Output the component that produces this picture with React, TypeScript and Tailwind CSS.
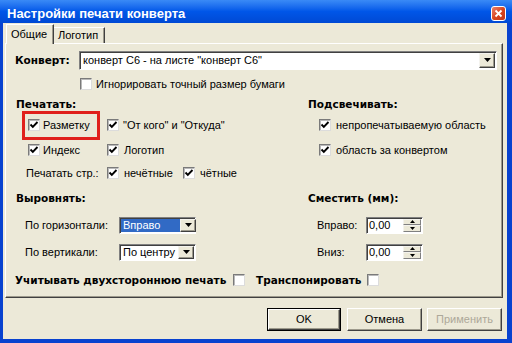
import React from "react";

const BASE = "font-['Liberation_Sans',Arial,sans-serif] text-[11px] leading-none whitespace-nowrap";
const REG = `${BASE} text-black`;
const BOLD = "font-['DejaVu_Sans',Verdana,sans-serif] font-bold text-[10.5px] text-black leading-none whitespace-nowrap";

function Check({ checked }: { checked: boolean }) {
  return (
    <span className="w-[12px] h-[12px] shrink-0 flex items-center justify-center bg-white border border-t-[#7a7a7a] border-l-[#7a7a7a] border-b-[#dcdcdc] border-r-[#dcdcdc] shadow-[inset_1px_1px_0_#b9b9b9]">
      {checked && (
        <svg width="10" height="10" viewBox="0 0 10 10">
          <path d="M1.5 4.5 L3.8 6.8 L8.5 2" fill="none" stroke="#000" strokeWidth="1.9" />
        </svg>
      )}
    </span>
  );
}

function Arrow() {
  return (
    <svg width="7" height="4" viewBox="0 0 7 4">
      <path d="M0 0 H7 L3.5 4 Z" fill="#000" />
    </svg>
  );
}

function DropBtn() {
  return (
    <span className="w-[16px] h-full shrink-0 flex items-center justify-center bg-[#ECE9D8] border border-t-[#f4f3ee] border-l-[#f4f3ee] border-b-[#404040] border-r-[#404040] shadow-[inset_-1px_-1px_0_#9d9a8c]">
      <Arrow />
    </span>
  );
}

function Combo({ w, text, selected }: { w: string; text: string; selected?: boolean }) {
  return (
    <div className={`${w} h-[17px] flex bg-white border border-t-[#808080] border-l-[#808080] border-b-white border-r-white shadow-[inset_1px_1px_0_#404040] p-[1px]`}>
      <span className="flex-1 flex items-center">
        {selected ? (
          <span className={`${BASE} text-white bg-[#316AC5] h-[13px] w-[59px] flex items-center px-[2px]`}>{text}</span>
        ) : (
          <span className={`${REG} h-[13px] flex items-center px-[2px]`}>{text}</span>
        )}
      </span>
      <DropBtn />
    </div>
  );
}

function Spin() {
  return (
    <div className="w-[57px] h-[17px] flex bg-white border border-t-[#808080] border-l-[#808080] border-b-white border-r-white shadow-[inset_1px_1px_0_#404040] p-[1px]">
      <span className={`${REG} flex-1 flex items-center pl-[1px]`}>0,00</span>
      <span className="w-[18px] flex flex-col">
        <span className="flex-1 flex items-center justify-center bg-[#ECE9D8] border border-t-[#f4f3ee] border-l-[#f4f3ee] border-b-[#808080] border-r-[#808080]">
          <svg width="5" height="3" viewBox="0 0 5 3"><path d="M2.5 0 L5 3 H0 Z" fill="#000" /></svg>
        </span>
        <span className="flex-1 flex items-center justify-center bg-[#ECE9D8] border border-t-[#f4f3ee] border-l-[#f4f3ee] border-b-[#808080] border-r-[#808080]">
          <svg width="5" height="3" viewBox="0 0 5 3"><path d="M0 0 H5 L2.5 3 Z" fill="#000" /></svg>
        </span>
      </span>
    </div>
  );
}

function Btn({ label, def, disabled }: { label: string; def?: boolean; disabled?: boolean }) {
  return (
    <div className={`h-[23px] flex items-center justify-center bg-[#ECE9D8] ${def ? "w-[74px] border border-black" : "w-[75px]"}`}>
      <div className="w-full h-full flex items-center justify-center border border-t-white border-l-white border-b-[#404040] border-r-[#404040] shadow-[inset_-1px_-1px_0_#9d9a8c]">
        <span className={`${BASE} ${disabled ? "text-[#aca899]" : "text-black"}`}>{label}</span>
      </div>
    </div>
  );
}

export default function App() {
  return (
    <div className="w-[512px] h-[343px] flex flex-col bg-[#0842CF] overflow-hidden">
      {/* Title bar */}
      <div className="h-[23px] shrink-0 flex items-center justify-between pl-[7px] pr-[6px] bg-gradient-to-b from-[#3A8AF6] via-[#0056E8] to-[#0049D4]">
        <span className="font-['Liberation_Sans',Arial,sans-serif] font-bold text-[13px] text-white leading-none whitespace-nowrap mt-[3px]">
          Настройки печати конверта
        </span>
        <span className="w-[15px] h-[15px] mt-[4px] rounded-[3px] border border-white bg-gradient-to-br from-[#E9806A] via-[#D9461E] to-[#C0351A] flex items-center justify-center">
          <svg width="9" height="9" viewBox="0 0 9 9">
            <path d="M1.5 1.5 L7.5 7.5 M7.5 1.5 L1.5 7.5" stroke="#fff" strokeWidth="1.8" />
          </svg>
        </span>
      </div>

      {/* Body */}
      <div className="flex-1 flex flex-col bg-[#ECE9D8] ml-[3px] mr-[5px] mb-[4px]">
        {/* Tabs */}
        <div className="h-[20px] shrink-0 flex items-end pl-[3px]">
          <div className="relative z-10 w-[48px] h-[20px] -mb-[1px] bg-[#ECE9D8] border-t border-l border-t-white border-l-white border-r border-r-[#404040] shadow-[inset_-1px_0_0_#9d9a8c] flex items-start pt-[4px] pl-[4px]">
            <span className={REG}>Общие</span>
          </div>
          <div className="w-[51px] h-[16px] bg-[#ECE9D8] border-t border-t-white border-r border-r-[#404040] shadow-[inset_-1px_0_0_#9d9a8c] flex items-center pl-[4px]">
            <span className={REG}>Логотип</span>
          </div>
        </div>

        {/* Panel */}
        <div className="ml-[2px] mr-[4px] h-[255px] shrink-0 flex flex-col border border-t-white border-l-white border-b-[#404040] border-r-[#404040] shadow-[inset_-1px_-1px_0_#9d9a8c]">
          {/* Конверт */}
          <div className="mt-[6px] h-[20px] flex items-center pl-[9px]">
            <span className={`${BOLD} w-[64px]`}>Конверт:</span>
            <div className="w-[418px] h-[19px] flex bg-white border border-t-[#808080] border-l-[#808080] border-b-white border-r-white shadow-[inset_1px_1px_0_#404040] p-[1px]">
              <span className={`${REG} flex-1 flex items-center pl-[2px]`}>конверт С6 - на листе "конверт С6"</span>
              <DropBtn />
            </div>
          </div>
          {/* Ignore */}
          <div className="mt-[4px] h-[20px] flex items-center pl-[74px] gap-[4px]">
            <Check checked={false} />
            <span className={REG}>Игнорировать точный размер бумаги</span>
          </div>

          {/* Headings */}
          <div className="h-[16px] flex items-center">
            <div className="w-[301px] pl-[10px]"><span className={BOLD}>Печатать:</span></div>
            <div className="flex-1 pl-[1px]"><span className={BOLD}>Подсвечивать:</span></div>
          </div>

          {/* Row 1 */}
          <div className="h-[30px] flex items-center">
            <div className="w-[301px] flex items-center pl-[16px]">
              <div className="w-[78px] h-[29px] border-[3px] border-[#E0201C] flex items-center pl-[3px] gap-[3px]">
                <Check checked />
                <span className={REG}>Разметку</span>
              </div>
              <div className="ml-[7px] flex items-center gap-[4px]">
                <Check checked />
                <span className={REG}>"От кого" и "Откуда"</span>
              </div>
            </div>
            <div className="flex-1 flex items-center pl-[12px] gap-[5px]">
              <Check checked />
              <span className={REG}>непропечатываемую область</span>
            </div>
          </div>

          {/* Row 2 */}
          <div className="h-[20px] flex items-center">
            <div className="w-[301px] flex items-center pl-[22px]">
              <div className="w-[79px] flex items-center gap-[3px]">
                <Check checked />
                <span className={REG}>Индекс</span>
              </div>
              <div className="flex items-center gap-[5px]">
                <Check checked />
                <span className={REG}>Логотип</span>
              </div>
            </div>
            <div className="flex-1 flex items-center pl-[12px] gap-[5px]">
              <Check checked />
              <span className={REG}>область за конвертом</span>
            </div>
          </div>

          {/* Row 3 */}
          <div className="mt-[3px] h-[20px] flex items-center pl-[20px]">
            <span className={`${REG} w-[81px]`}>Печатать стр.:</span>
            <div className="w-[76px] flex items-center gap-[5px]">
              <Check checked />
              <span className={REG}>нечётные</span>
            </div>
            <div className="flex items-center gap-[5px]">
              <Check checked />
              <span className={REG}>чётные</span>
            </div>
          </div>

          {/* Align / Shift headings */}
          <div className="mt-[3px] h-[20px] flex items-center">
            <div className="w-[301px] pl-[10px]"><span className={BOLD}>Выровнять:</span></div>
            <div className="flex-1 pl-[1px]"><span className={BOLD}>Сместить (мм):</span></div>
          </div>

          {/* Horizontal / Right */}
          <div className="mt-[9px] h-[20px] flex items-center">
            <div className="w-[301px] flex items-center pl-[19px]">
              <span className={`${REG} w-[94px]`}>По горизонтали:</span>
              <Combo w="w-[77px]" text="Вправо" selected />
            </div>
            <div className="flex-1 flex items-center pl-[10px]">
              <span className={`${REG} w-[49px]`}>Вправо:</span>
              <Spin />
            </div>
          </div>

          {/* Vertical / Down */}
          <div className="mt-[7px] h-[20px] flex items-center">
            <div className="w-[301px] flex items-center pl-[19px]">
              <span className={`${REG} w-[94px]`}>По вертикали:</span>
              <Combo w="w-[77px]" text="По центру" />
            </div>
            <div className="flex-1 flex items-center pl-[10px]">
              <span className={`${REG} w-[49px]`}>Вниз:</span>
              <Spin />
            </div>
          </div>

          {/* Duplex / Transpose */}
          <div className="mt-[8px] h-[20px] flex items-center">
            <div className="w-[250px] flex items-center pl-[9px] gap-[7px]">
              <span className={BOLD}>Учитывать двухстороннюю печать</span>
              <Check checked={false} />
            </div>
            <div className="flex items-center gap-[5px]">
              <span className={BOLD}>Транспонировать</span>
              <Check checked={false} />
            </div>
          </div>
        </div>

        {/* Buttons */}
        <div className="mt-[10px] flex justify-end pr-[5px] gap-[5px]">
          <div className="mr-[1px]"><Btn label="OK" def /></div>
          <Btn label="Отмена" />
          <Btn label="Применить" disabled />
        </div>
      </div>
    </div>
  );
}
